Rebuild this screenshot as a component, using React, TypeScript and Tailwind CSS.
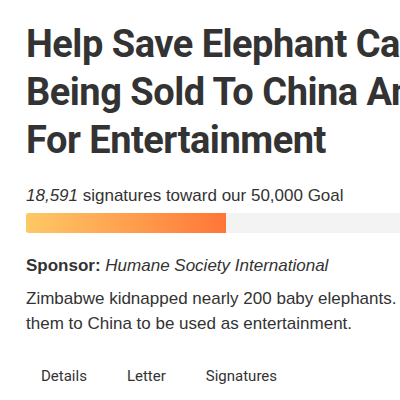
export default function App() {
  return (
    <div className="w-[400px] h-[400px] overflow-hidden bg-white">
      <div className="w-[700px] pl-[26px] pt-[20px] text-[#333]">
        <h1 className="font-['Roboto',sans-serif] font-bold text-[38px] leading-[48px] tracking-[-0.5px] text-[#333]">
          Help Save Elephant Calves From
          <br />
          Being Sold To China And Used
          <br />
          For Entertainment
        </h1>

        <p className="mt-[22px] font-['Liberation_Sans',sans-serif] text-[17px] leading-[20px]">
          <em>18,591</em> signatures toward our 50,000 Goal
        </p>
        <div className="mt-[7px] flex h-[20px] w-[500px] overflow-hidden rounded-[3px] bg-[#f3f3f3]">
          <div className="h-full w-[200px] bg-gradient-to-r from-[#fec865] to-[#ff7538]" />
        </div>

        <p className="mt-[23px] font-['Liberation_Sans',sans-serif] text-[17px] leading-[20px]">
          <span className="font-bold">Sponsor:</span> <em>Humane Society International</em>
        </p>
        <p className="mt-[10px] font-['Liberation_Sans',sans-serif] text-[17px] leading-[25px]">
          Zimbabwe kidnapped nearly 200 baby elephants. Now they plan to sell
          <br />
          them to China to be used as entertainment.
        </p>

        <nav className="mt-[30px] flex gap-[40px] pl-[15px] font-['Roboto',sans-serif] text-[15px] leading-[20px]">
          <span>Details</span>
          <span>Letter</span>
          <span>Signatures</span>
        </nav>
      </div>
    </div>
  );
}
